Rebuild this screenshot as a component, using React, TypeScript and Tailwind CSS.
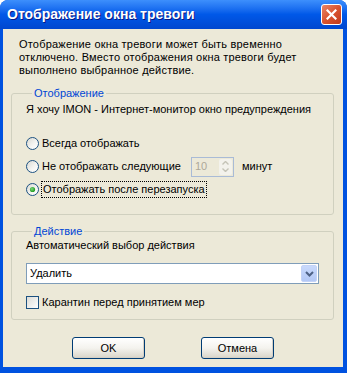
import React from "react";

const font = { fontFamily: '"Liberation Sans", Arial, sans-serif' };

function Radio({ checked }: { checked?: boolean }) {
  return (
    <svg width="13" height="13" viewBox="0 0 13 13" className="shrink-0">
      <defs>
        <linearGradient id="rfill" x1="0" y1="0" x2="1" y2="1">
          <stop offset="0" stopColor="#d8d8d1" />
          <stop offset="0.6" stopColor="#f6f6f3" />
          <stop offset="1" stopColor="#ffffff" />
        </linearGradient>
        <radialGradient id="rdot" cx="0.4" cy="0.4" r="0.6">
          <stop offset="0" stopColor="#7fd87f" />
          <stop offset="1" stopColor="#1d9a1d" />
        </radialGradient>
      </defs>
      <circle cx="6.5" cy="6.5" r="6" fill="url(#rfill)" stroke="#1c5180" strokeWidth="1" />
      {checked && <circle cx="6.5" cy="6.5" r="2.6" fill="url(#rdot)" />}
    </svg>
  );
}

function XpButton({ children }: { children: React.ReactNode }) {
  return (
    <button className="w-[73px] h-[22px] rounded-[3px] border border-[#003c74] bg-gradient-to-b from-[#ffffff] via-[#f4f3ee] to-[#d9d5c9] text-[11px] text-black flex items-center justify-center shadow-[inset_-1px_-1px_0_#d6d0c5]">
      {children}
    </button>
  );
}

export default function App() {
  return (
    <div className="w-[347px] h-[373px] bg-white" style={font}>
      <div className="w-[347px] h-[373px] rounded-t-[8px] bg-[#0052e0] flex flex-col overflow-hidden">
        {/* Title bar */}
        <div className="h-[29px] shrink-0 flex items-center justify-between pl-[7px] pr-[5px] bg-gradient-to-b from-[#3d8ffc] via-[#0058e8] to-[#0047cf]">
          <span className="text-white font-bold text-[14px] [text-shadow:1px_1px_0_#0a1883]">
            Отображение окна тревоги
          </span>
          <div className="w-[21px] h-[21px] rounded-[3px] border border-white bg-gradient-to-br from-[#e98466] via-[#d9532f] to-[#c2391b] flex items-center justify-center">
            <svg width="11" height="11" viewBox="0 0 11 11">
              <path d="M1.5 1.5 L9.5 9.5 M9.5 1.5 L1.5 9.5" stroke="#ffffff" strokeWidth="2.2" strokeLinecap="square" />
            </svg>
          </div>
        </div>

        {/* Body */}
        <div className="ml-[3px] mr-[4px] mb-[6px] flex-1 bg-[#ece9d8] flex flex-col text-[11px] text-black leading-[13px]">
          <p className="pl-[16px] pt-[9px] tracking-[0.2px]">
            Отображение окна тревоги может быть временно
            <br />
            отключено. Вместо отображения окна тревоги будет
            <br />
            выполнено выбранное действие.
          </p>

          <fieldset className="mt-[9px] ml-[8px] w-[323px] border border-[#d0d0bf] rounded-[3px] pl-[14px] pb-[13px]">
            <legend className="ml-[6px] px-[2px] h-[14px] leading-[14px] text-[#0046d5]">Отображение</legend>
            <div className="mt-[3px]">Я хочу IMON - Интернет-монитор окно предупреждения</div>
            <div className="mt-[16px] h-[23px] flex items-center gap-[3px]">
              <Radio />
              <span>Всегда отображать</span>
            </div>
            <div className="h-[23px] flex items-center gap-[3px]">
              <Radio />
              <span className="w-[146px]">Не отображать следующие</span>
              <div className="w-[43px] h-[20px] border border-[#a9bbd6] flex">
                <div className="flex-1 pl-[3px] text-[#aca899] flex items-center">10</div>
                <div className="w-[13px] my-[1px] mr-[1px] rounded-[2px] bg-[#f3f2ec] flex flex-col items-center justify-center gap-[3px]">
                  <svg width="7" height="4" viewBox="0 0 7 4"><path d="M0.5 3.5 L3.5 0.5 L6.5 3.5" fill="none" stroke="#c4c3b6" strokeWidth="1.4" /></svg>
                  <svg width="7" height="4" viewBox="0 0 7 4"><path d="M0.5 0.5 L3.5 3.5 L6.5 0.5" fill="none" stroke="#c4c3b6" strokeWidth="1.4" /></svg>
                </div>
              </div>
              <span className="ml-[5px]">минут</span>
            </div>
            <div className="h-[23px] flex items-center gap-[2px]">
              <Radio checked />
              <span className="border border-dotted border-black px-[1px] leading-[15px]">Отображать после перезапуска</span>
            </div>
          </fieldset>

          <fieldset className="mt-[9px] ml-[8px] w-[323px] border border-[#d0d0bf] rounded-[3px] pl-[14px] pb-[10px]">
            <legend className="ml-[6px] px-[2px] h-[14px] leading-[14px] text-[#0046d5]">Действие</legend>
            <div className="mt-[1px]">Автоматический выбор действия</div>
            <div className="mt-[11px] w-[293px] h-[21px] border border-[#7f9db9] bg-white flex items-center justify-between pl-[3px] pr-[1px]">
              <span>Удалить</span>
              <div className="w-[16px] h-[17px] rounded-[2px] bg-gradient-to-b from-[#c8d9fc] to-[#b3c8f5] border border-[#c3d3f7] flex items-center justify-center">
                <svg width="9" height="6" viewBox="0 0 9 6"><path d="M1 1 L4.5 4.5 L8 1" fill="none" stroke="#4d6185" strokeWidth="2" /></svg>
              </div>
            </div>
            <div className="mt-[12px] h-[13px] flex items-center gap-[3px]">
              <div className="w-[13px] h-[13px] border border-[#1c5180] bg-gradient-to-br from-[#dcdcd7] to-white" />
              <span>Карантин перед принятием мер</span>
            </div>
          </fieldset>

          <div className="mt-[17px] flex justify-center gap-[56px]">
            <XpButton>OK</XpButton>
            <XpButton>Отмена</XpButton>
          </div>
        </div>
      </div>
    </div>
  );
}
